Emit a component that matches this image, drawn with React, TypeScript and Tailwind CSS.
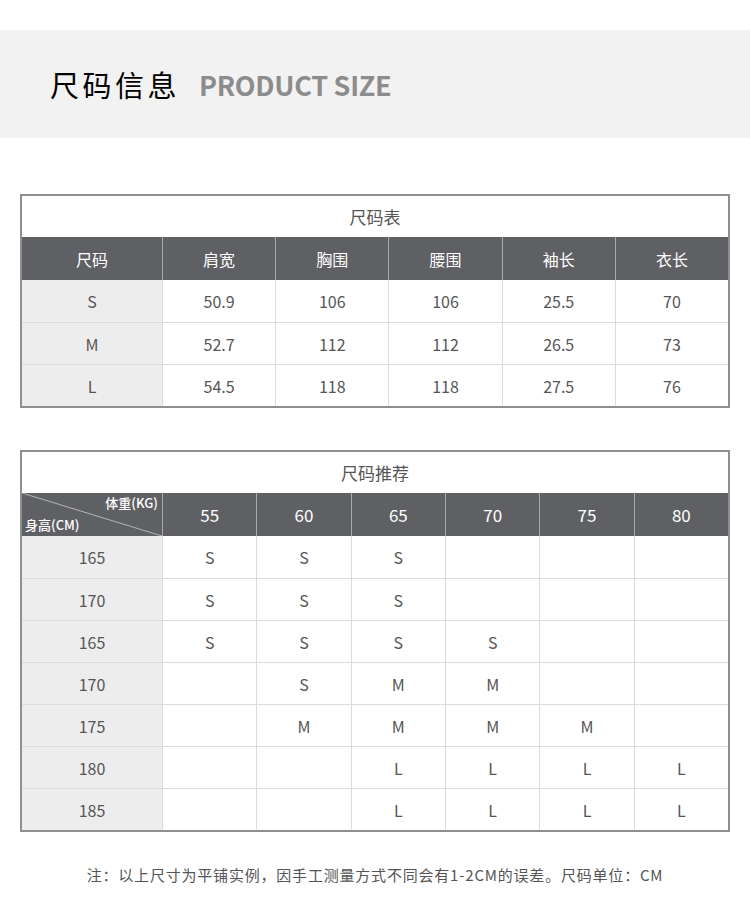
const FONT = "font-['Noto_Sans_CJK_SC','Noto_Sans',sans-serif]";

const sizeCols = ['尺码', '肩宽', '胸围', '腰围', '袖长', '衣长'];
const sizeRows = [
  ['S', '50.9', '106', '106', '25.5', '70'],
  ['M', '52.7', '112', '112', '26.5', '73'],
  ['L', '54.5', '118', '118', '27.5', '76'],
];

const weights = ['55', '60', '65', '70', '75', '80'];
const recRows: [string, string[]][] = [
  ['165', ['S', 'S', 'S', '', '', '']],
  ['170', ['S', 'S', 'S', '', '', '']],
  ['165', ['S', 'S', 'S', 'S', '', '']],
  ['170', ['', 'S', 'M', 'M', '', '']],
  ['175', ['', 'M', 'M', 'M', 'M', '']],
  ['180', ['', '', 'L', 'L', 'L', 'L']],
  ['185', ['', '', 'L', 'L', 'L', 'L']],
];

export default function App() {
  return (
    <div className={`w-[750px] h-[900px] bg-white ${FONT}`}>
      {/* Banner */}
      <div className="h-[30px]" />
      <div className="h-[108px] bg-[#f2f2f2] flex items-center pl-[50px] gap-[19px]">
        <span className="text-[29px] tracking-[3.5px] text-black leading-none">尺码信息</span>
        <span className="text-[27px] font-bold text-[#8c8c8c] leading-none tracking-[-0.3px]">PRODUCT SIZE</span>
      </div>

      {/* Size chart */}
      <div className="mt-[56px] mx-[20px] w-[710px] border-2 border-[#8f8f8f]">
        <div className="h-[41px] flex items-center justify-center text-[17px] text-[#555]">尺码表</div>
        <div className="grid grid-cols-[140px_1fr_1fr_1fr_1fr_1fr]">
          {sizeCols.map((c, i) => (
            <div
              key={c}
              className={`h-[43px] bg-[#5f6064] text-white text-[16px] flex items-center justify-center ${i > 0 ? 'border-l border-[#aaaaac]' : ''}`}
            >
              {c}
            </div>
          ))}
          {sizeRows.map((row, r) =>
            row.map((v, i) => (
              <div
                key={`${r}-${i}`}
                className={`h-[42px] text-[16px] text-[#555] flex items-center justify-center ${i > 0 ? 'border-l border-[#dcdcdc] bg-white' : 'bg-[#ededed]'} ${r > 0 ? 'border-t border-[#dcdcdc]' : ''}`}
              >
                {v}
              </div>
            ))
          )}
        </div>
      </div>

      {/* Recommendation */}
      <div className="mt-[42px] mx-[20px] w-[710px] border-2 border-[#8f8f8f]">
        <div className="h-[41px] flex items-center justify-center text-[17px] text-[#555]">尺码推荐</div>
        <div className="grid grid-cols-[140px_1fr_1fr_1fr_1fr_1fr_1fr]">
          <div className="relative h-[43px] bg-[#5f6064] text-white overflow-hidden">
            <svg className="absolute inset-0" width="140" height="43" viewBox="0 0 140 43">
              <line x1="0" y1="0" x2="140" y2="43" stroke="#b5b5b8" strokeWidth="1" />
            </svg>
            <span className="absolute right-[4px] top-[3px] text-[13px] font-medium leading-none">体重(KG)</span>
            <span className="absolute left-[3px] bottom-[5px] text-[13px] font-medium leading-none">身高(CM)</span>
          </div>
          {weights.map((w) => (
            <div
              key={w}
              className="h-[43px] bg-[#5f6064] text-white text-[17px] flex items-center justify-center border-l border-[#aaaaac]"
            >
              {w}
            </div>
          ))}
          {recRows.map(([h, vals], r) => (
            <>
              <div
                key={`h-${r}`}
                className={`h-[42px] bg-[#ededed] text-[16px] text-[#555] flex items-center justify-center ${r > 0 ? 'border-t border-[#dcdcdc]' : ''}`}
              >
                {h}
              </div>
              {vals.map((v, i) => (
                <div
                  key={`${r}-${i}`}
                  className={`h-[42px] bg-white text-[16px] text-[#555] flex items-center justify-center border-l border-[#dcdcdc] ${r > 0 ? 'border-t' : ''}`}
                >
                  {v}
                </div>
              ))}
            </>
          ))}
        </div>
      </div>

      {/* Note */}
      <div className="mt-[32px] text-center text-[15px] tracking-[0.8px] text-[#555]">
        注：以上尺寸为平铺实例，因手工测量方式不同会有1-2CM的误差。尺码单位：CM
      </div>
    </div>
  );
}
